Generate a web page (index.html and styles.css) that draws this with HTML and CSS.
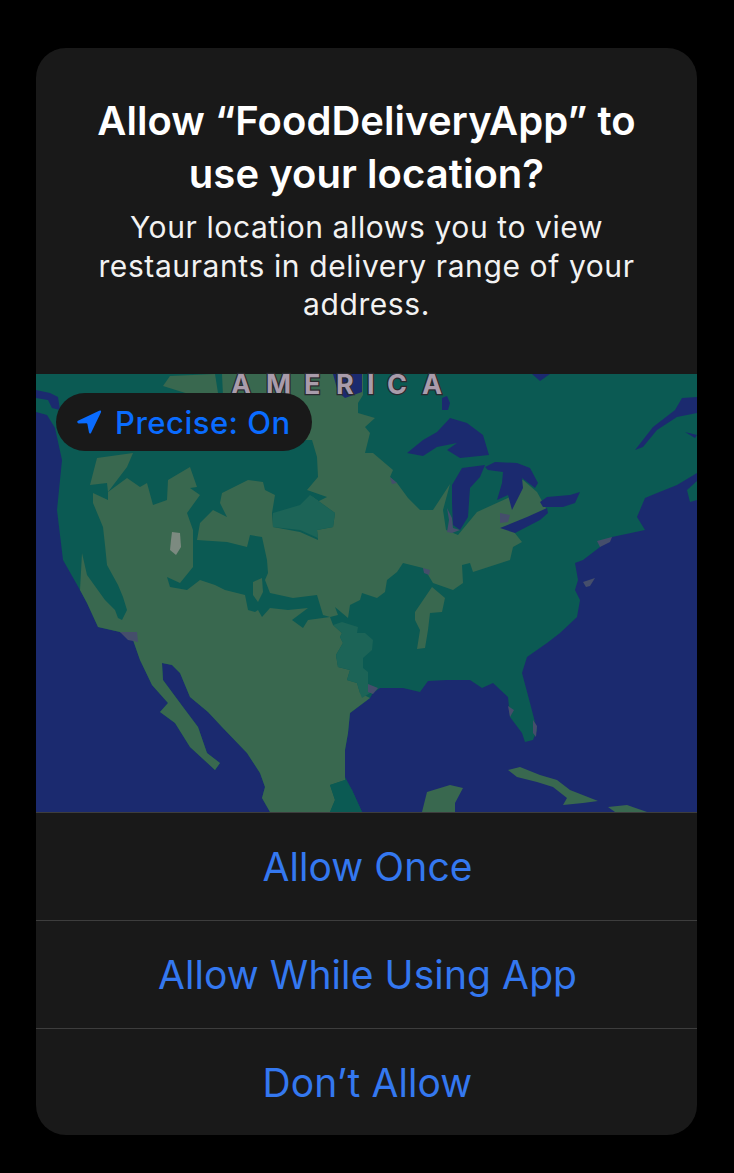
FILE: index.html
```html
<!DOCTYPE html>
<html lang="en">
<head>
    <meta charset="UTF-8">
    <meta name="viewport" content="width=device-width, initial-scale=1.0">
    <title>Location Permission</title>
    <link rel="stylesheet" href="styles.css">
</head>
<body>

<div class="alert">
    <div class="alert-header">
        <h2>Allow “FoodDeliveryApp” to<br>use your location?</h2>
        <p>Your location allows you to view<br>restaurants in delivery range of your<br>address.</p>
    </div>

    <div class="map">
        <svg class="map-art" viewBox="36 374 661 438" width="661" height="438" aria-hidden="true">
            <rect class="ocean" x="36" y="374" width="661" height="438"/>
            <!-- land, teal first, coast runs clockwise from the top left -->
            <path class="teal" d="M36 374 L36 412 L47 415 L55 428 L62 460 L57 510 L63 560 L80 590 L87 603 L98 627 L120 632 L133 640 L140 660 L152 685 L168 703 L160 712 L175 723 L190 747 L215 770 L220 763 L207 753 L198 727 L183 707 L163 680 L162 663 L172 665 L180 673 L190 697 L208 712 L222 727 L247 753 L260 773 L265 787 L262 798 L270 812 L362 812 L352 790 L345 777 L345 750 L348 733 L350 713 L370 698 L373 693 L380 688 L403 688 L420 692 L428 681 L447 680 L470 680 L482 688 L493 683 L508 697 L510 717 L522 733 L525 742 L533 740 L537 730 L530 703 L522 673 L527 657 L547 643 L560 633 L577 617 L580 600 L575 590 L578 580 L575 563 L583 560 L600 547 L612 537 L645 530 L637 517 L645 498 L657 493 L677 485 L697 473 L697 374 Z"/>
            <!-- green, south and west -->
            <path class="green" d="M80 590 L82 553 L87 575 L105 600 L115 610 L118 618 L122 620 L127 610 L123 597 L118 585 L107 565 L105 545 L103 527 L93 503 L93 493 L108 500 L108 492 L127 478 L140 487 L147 483 L153 505 L167 500 L168 480 L190 467 L197 487 L190 488 L200 495 L187 513 L193 530 L193 567 L180 583 L167 577 L170 587 L187 590 L200 580 L215 585 L225 590 L245 595 L248 610 L255 612 L258 610 L262 617 L270 608 L288 610 L308 608 L292 620 L303 628 L308 620 L330 617 L333 625 L342 633 L340 637 L343 643 L336 655 L338 667 L350 670 L347 680 L357 683 L360 693 L370 698 L350 713 L348 733 L345 750 L345 780 L330 785 L335 800 L330 812 L270 812 L262 798 L265 787 L260 773 L247 753 L222 727 L208 712 L190 697 L180 673 L172 665 L162 663 L163 680 L183 707 L198 727 L207 753 L220 763 L215 770 L190 747 L175 723 L160 712 L168 703 L152 685 L140 660 L133 640 L120 632 L98 627 L87 603 Z"/>
            <!-- green, plains up to the lakes -->
            <path class="green" d="M323 615 L317 595 L293 598 L270 593 L265 580 L268 573 L267 560 L262 537 L250 535 L247 547 L227 542 L197 540 L200 523 L213 510 L227 517 L220 503 L222 493 L248 480 L263 482 L265 490 L275 495 L272 513 L273 527 L300 532 L318 540 L317 530 L333 527 L335 513 L310 495 L317 502 L327 497 L307 490 L318 477 L317 457 L312 440 L225 440 L222 374 L363 374 L363 395 L358 403 L358 413 L375 418 L365 427 L370 433 L365 453 L373 453 L393 470 L390 477 L397 483 L408 498 L420 510 L433 510 L450 484 L443 510 L446 530 L458 535 L477 512 L510 497 L517 480 L523 480 L537 492 L547 510 L510 527 L522 542 L513 547 L510 560 L473 572 L470 563 L462 565 L463 583 L453 590 L433 583 L427 573 L423 568 L403 563 L397 572 L387 580 L385 592 L377 598 L362 593 L360 600 L350 605 L348 618 L335 607 L338 615 L330 617 Z"/>
            <path class="green" d="M90 485 L97 458 L133 453 L127 467 L108 492 L107 483 Z"/>
            <path class="green" d="M163 386 L170 376 L215 374 L218 393 L195 396 Z"/>
            <path class="green" d="M432 587 L445 598 L442 612 L430 613 L428 630 L425 648 L417 649 L420 630 L415 620 L415 612 Z"/>
            <path class="green" d="M253 582 L262 578 L263 592 L258 602 L253 595 Z"/>
            <path class="mid" d="M333 625 L342 622 L358 627 L357 633 L365 633 L373 640 L372 650 L363 658 L363 668 L368 672 L368 685 L375 690 L362 698 L360 693 L357 683 L347 680 L350 670 L338 667 L336 655 L343 643 L340 637 L342 633 Z"/>
            <path class="mid" d="M273 513 L300 505 L310 495 L335 513 L333 527 L317 530 L318 538 L300 530 L273 527 Z"/>
            <!-- lakes -->
            <g class="ocean">
                <path d="M407 453 L423 440 L437 432 L450 418 L467 423 L483 435 L489 455 L460 458 L447 450 L457 443 L437 447 L423 456 Z"/>
                <path d="M452 485 L462 468 L485 465 L480 477 L470 488 L468 517 L460 530 L453 525 L452 503 Z"/>
                <path d="M485 467 L495 462 L517 463 L530 468 L538 483 L535 488 L522 478 L523 488 L517 500 L512 510 L508 495 L497 500 L502 483 L503 472 L488 470 Z"/>
                <path d="M500 528 L527 517 L547 508 L548 513 L540 520 L515 533 Z"/>
                <path d="M540 502 L547 497 L570 495 L580 492 L575 503 L563 507 L543 507 Z"/>
                <path d="M442 398 L447 396 L450 403 L448 410 L442 410 Z"/>
                <path d="M532 374 L550 374 L540 381 Z"/>
                <path d="M635 450 L653 427 L675 410 L682 398 L697 397 L697 413 L677 417 L657 430 L643 447 Z"/>
                <path d="M685 432 L697 435 L695 438 Z"/>
                <path d="M36 390 L50 393 L58 397 L60 410 L52 408 L48 400 L36 398 Z"/>
                <path d="M333 374 L362 374 L362 392 L345 398 L338 392 Z"/>
            </g>
            <path class="teal" d="M687 490 L697 481 L697 500 L690 502 Z"/>
            <!-- islands -->
            <path class="green" d="M508 770 L520 767 L540 775 L557 780 L570 790 L598 801 L583 803 L563 805 L567 798 L553 787 L537 782 L517 777 Z"/>
            <path class="green" d="M608 807 L627 805 L647 812 L615 812 Z"/>
            <path class="green" d="M422 812 L427 792 L450 785 L463 788 L455 803 L455 812 Z"/>
            <path class="teal" d="M330 785 L345 780 L352 790 L362 812 L330 812 L335 800 Z"/>
            <!-- grey patches -->
            <path class="slate" d="M120 632 L137 632 L138 642 L128 640 Z"/>
            <path class="slate" d="M447 508 L452 518 L453 528 L460 530 L452 533 L447 532 L449 520 Z"/>
            <path class="slate" d="M500 513 L510 515 L508 522 L500 523 Z"/>
            <path class="slate" d="M390 477 L397 483 L392 484 Z"/>
            <path class="slate" d="M423 568 L430 570 L429 575 L424 573 Z"/>
            <path class="slate" d="M368 684 L378 688 L373 694 L368 692 Z"/>
            <path class="slate" d="M597 541 L612 537 L610 542 L600 547 Z"/>
            <path class="slate" d="M583 582 L595 578 L590 586 L586 587 Z"/>
            <path class="slate" d="M533 720 L537 726 L536 737 L533 733 Z"/>
            <path class="slate" d="M510 717 L514 710 L508 706 Z"/>
            <path class="snow" d="M172 532 L180 533 L181 547 L176 555 L170 550 L171 540 Z"/>
            <text class="map-label" x="231" y="394">A</text>
            <text class="map-label" x="266" y="394">M</text>
            <text class="map-label" x="304" y="394">E</text>
            <text class="map-label" x="336" y="394">R</text>
            <text class="map-label" x="367" y="394">I</text>
            <text class="map-label" x="387" y="394">C</text>
            <text class="map-label" x="422" y="394">A</text>
        </svg>
        <div class="precise-pill">
            <svg class="precise-icon" viewBox="0 0 25 25" width="25" height="25" aria-hidden="true">
                <path d="M1 10.8 L22.2 0.8 Q24.6 0 24 2.2 L14 23 Q12.8 24.6 12 22.6 L10.4 14 Q10.2 13.2 9.4 13.2 L1.6 13.4 Q-0.8 12.2 1 10.8 Z"/>
            </svg>
            <span>Precise: On</span>
        </div>
    </div>

    <div class="alert-actions">
        <div class="action">Allow Once</div>
        <div class="action">Allow While Using App</div>
        <div class="action">Don’t Allow</div>
    </div>
</div>

</body>
</html>
```

FILE: styles.css
```css
body {
    margin: 0;
    background-color: #000000;
    font-family: Inter, "Noto Sans", "Liberation Sans", sans-serif;
    color: #ffffff;
    min-height: 1173px;
    padding: 48px 37px 38px 36px;
    box-sizing: border-box;
}
.alert {
    background-color: #191919;
    border-radius: 30px;
    overflow: hidden;
}
.alert-header {
    height: 326px;
    box-sizing: border-box;
    padding-top: 46px;
    text-align: center;
}
h2 {
    margin: 0;
    font-size: 40px;
    line-height: 53px;
    font-weight: 600;
    letter-spacing: 0.05px;
}
.alert-header p {
    margin: 8px 0 0;
    font-size: 30px;
    line-height: 38.5px;
    font-weight: 400;
    letter-spacing: 0.6px;
    color: #f2f2f2;
}
.map {
    position: relative;
    height: 438px;
}
.map-art {
    display: block;
    overflow: visible;
}
.ocean { fill: #1b2a6f; }
.teal { fill: #0b5a53; }
.green { fill: #39684f; }
.mid { fill: #1c6457; }
.slate { fill: #454e6b; }
.snow { fill: #7c8a80; }
.map-label {
    font-family: Inter, "Liberation Sans", sans-serif;
    font-size: 27px;
    font-weight: 700;
    fill: #a99cab;
    stroke: #2a2a30;
    stroke-width: 2.5px;
    paint-order: stroke;
}
.precise-pill {
    position: absolute;
    left: 20px;
    top: 19px;
    width: 256px;
    height: 58px;
    box-sizing: border-box;
    padding-left: 21px;
    border-radius: 29px;
    background-color: #191919;
    color: #0a6cff;
    display: flex;
    align-items: center;
    gap: 13px;
    font-size: 31px;
    font-weight: 550;
    letter-spacing: 0.5px;
}
.precise-icon {
    fill: #0a6cff;
    flex: none;
}
.action {
    height: 108px;
    box-sizing: border-box;
    padding-left: 2px;
    border-top: 1px solid #3d3d3d;
    display: flex;
    align-items: center;
    justify-content: center;
    font-size: 39px;
    font-weight: 400;
    letter-spacing: 0.1px;
    color: #3478f0;
}
.action:last-child {
    height: 107px;
}
```
